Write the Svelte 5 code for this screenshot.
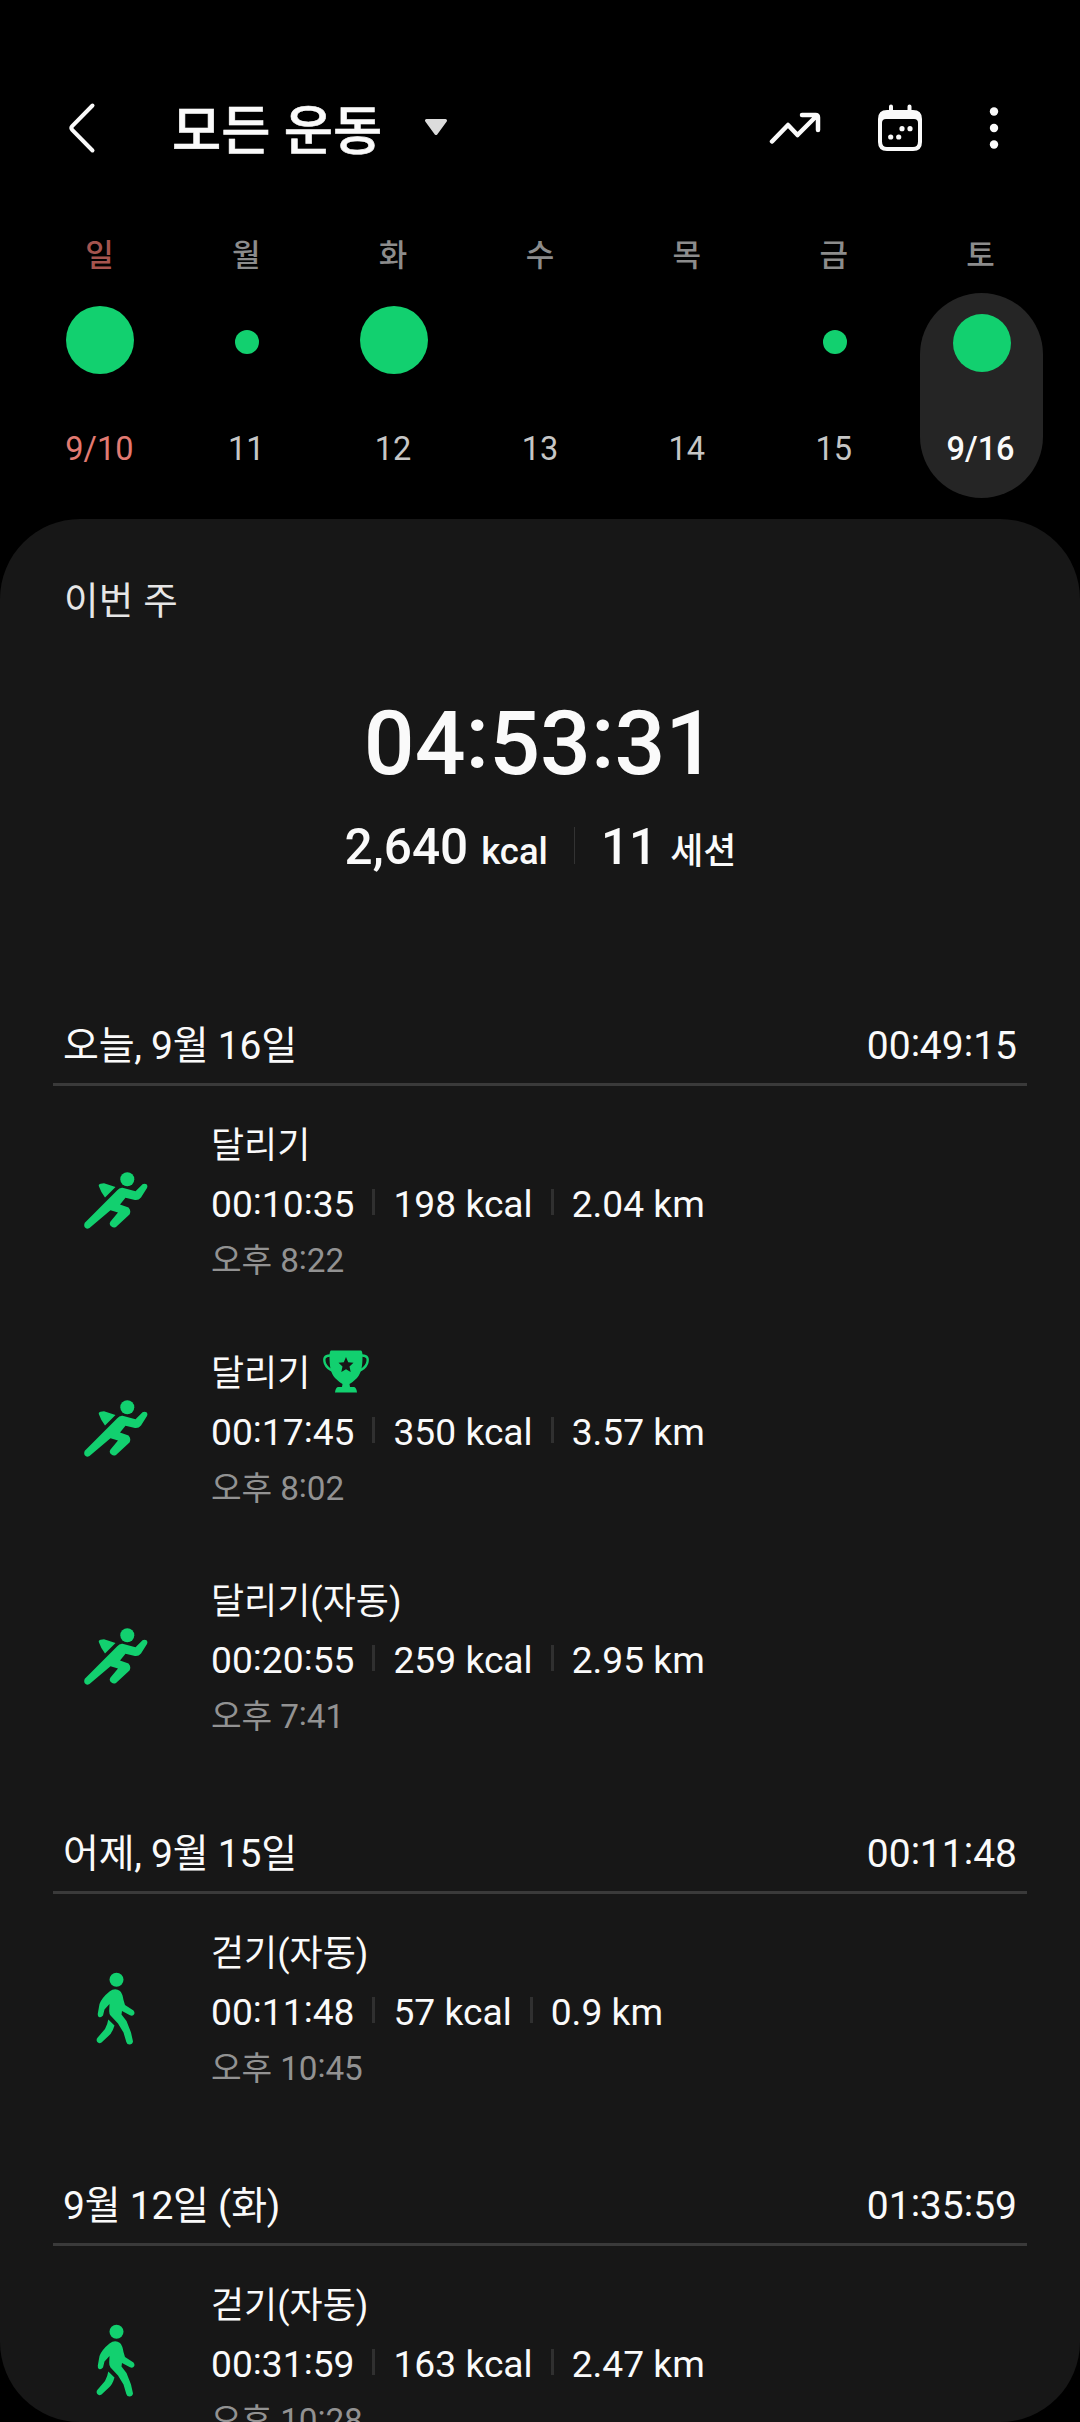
<script>
  const week = [
    { name: '일', date: '9/10', size: 68, kind: 'sunday' },
    { name: '월', date: '11', size: 24 },
    { name: '화', date: '12', size: 68 },
    { name: '수', date: '13', size: 0 },
    { name: '목', date: '14', size: 0 },
    { name: '금', date: '15', size: 24 },
    { name: '토', date: '9/16', size: 58, kind: 'selected' },
  ];

  const sections = [
    {
      title: '오늘, 9월 16일',
      total: '00:49:15',
      entries: [
        { icon: 'run', name: '달리기', stats: ['00:10:35', '198 kcal', '2.04 km'], time: '오후 8:22' },
        { icon: 'run', name: '달리기', trophy: true, stats: ['00:17:45', '350 kcal', '3.57 km'], time: '오후 8:02' },
        { icon: 'run', name: '달리기(자동)', stats: ['00:20:55', '259 kcal', '2.95 km'], time: '오후 7:41' },
      ],
    },
    {
      title: '어제, 9월 15일',
      total: '00:11:48',
      entries: [
        { icon: 'walk', name: '걷기(자동)', stats: ['00:11:48', '57 kcal', '0.9 km'], time: '오후 10:45' },
      ],
    },
    {
      title: '9월 12일 (화)',
      total: '01:35:59',
      entries: [
        { icon: 'walk', name: '걷기(자동)', stats: ['00:31:59', '163 kcal', '2.47 km'], time: '오후 10:28' },
      ],
    },
  ];
</script>

{#snippet clock(text)}{#each text.split(':') as part, i}{#if i > 0}<span class="colon">:</span>{/if}{part}{/each}{/snippet}

<main>
  <header class="bar">
    <svg class="back" viewBox="0 0 30 52" aria-hidden="true">
      <path d="M25.500 3.500 L5.200 24.200 Q3.500 26 5.200 27.800 L25.500 48.500" />
    </svg>
    <h1>모든 운동</h1>
    <svg class="caret" viewBox="0 0 24 18" aria-hidden="true">
      <path d="M2.500 2.500 H21.500 L12 15.500 Z" />
    </svg>
    <div class="actions">
      <svg class="trend" viewBox="0 0 52 34" aria-hidden="true">
        <path d="M3 30.500 L19 14 L28.500 24 L48 4.500 M33 4 H46.500 Q49 4 49 6.500 V19" />
      </svg>
      <svg class="calendar" viewBox="0 0 44 48" aria-hidden="true">
        <path class="pins" d="M13 2.500 V9 M31.500 2.500 V9" />
        <path
          fill-rule="evenodd"
          d="M9 6 H35 Q44 6 44 15 V38 Q44 47 35 47 H9 Q0 47 0 38 V15 Q0 6 9 6 Z M8 15 Q4 15 4 19 V37.500 Q4 43 9 43 H35 Q40 43 40 37.500 V19 Q40 15 36 15 Z"
        />
        <circle cx="24" cy="24.700" r="2.600" />
        <circle cx="32" cy="24.700" r="2.600" />
        <circle cx="12.700" cy="33" r="2.600" />
        <circle cx="20.700" cy="33" r="2.600" />
      </svg>
      <svg class="more" viewBox="0 0 10 44" aria-hidden="true">
        <circle cx="5" cy="5.500" r="4.200" />
        <circle cx="5" cy="22" r="4.200" />
        <circle cx="5" cy="38.500" r="4.200" />
      </svg>
    </div>
  </header>

  <section class="week">
    {#each week as day}
      <div class="day {day.kind ?? ''}">
        <span class="name">{day.name}</span>
        <div class="pill">
          <div class="dot-box">
            {#if day.size}
              <i class:large={day.size > 60} style="width:{day.size}px;height:{day.size}px"></i>
            {/if}
          </div>
          <span class="date">{day.date}</span>
        </div>
      </div>
    {/each}
  </section>

  <section class="sheet">
    <h2>이번 주</h2>
    <p class="total">{@render clock('04:53:31')}</p>
    <div class="summary">
      <span class="num">2,640</span><span class="unit">kcal</span>
      <i></i>
      <span class="num">11</span><span class="unit ko">세션</span>
    </div>

    <div class="log">
      {#each sections as section}
        <div class="group-head">
          <span>{section.title}</span>
          <span>{@render clock(section.total)}</span>
        </div>
        {#each section.entries as entry}
          <article>
            <div class="icon">
              {#if entry.icon === 'run'}
                <svg class="run" viewBox="0 0 64 58" aria-hidden="true">
                  <circle cx="43.300" cy="7.300" r="7" />
                  <path d="M15 14.500 Q14 12.300 16.500 11.700 L20 11.200 L31.500 15 L21 25.500 Q17 20.500 15 14.500 Z" />
                  <path
                    d="M33 18.500 Q35.500 15.500 38.500 15.800 L51.500 19.300 L58.500 12.300 Q60.500 11.200 62.500 12.300 Q64 13.800 63 16 L57 25.500 Q54.500 28.500 51 28 L41.500 25.800 L36 32.500 L44.500 35.500 Q47.500 38.500 45.500 42.500 L32 55 Q29.500 56.300 27.500 54.500 Q24.500 52.500 26.500 49.500 L34 40.500 L26.500 38.300 L5.500 56 Q2.500 57.500 1 55.500 Q-0.500 53.500 0.800 50.800 Z"
                  />
                </svg>
              {:else}
                <svg class="walk" viewBox="0 0 40 74" aria-hidden="true">
                  <circle cx="20.500" cy="7.800" r="7" />
                  <path
                    d="M13.500 19.500 Q19 15.500 24 19 Q26.500 21.500 27.500 28 L29 33 L37.500 38.500 Q39.500 41 37.500 43 Q36 44.300 34 43.300 L26 39 L25.500 42.500 L30.500 49 L35 60.500 L37 69.500 Q36.500 72.500 33.500 72.500 Q31 72.500 30.300 70 L27.500 60.500 L22 51.500 L14.500 43.500 Q13 41.500 13.200 38.500 L13.500 32 L8.500 37.500 L7 43.500 Q5 46 3 45 Q1.500 44.300 1.800 41.500 L3.500 32 Q6 25.500 13.500 19.500 Z"
                  />
                  <path d="M12.300 47.500 L18.500 53.500 Q16.500 60.500 13 63.500 L5.500 70.500 Q3 72 1.300 70 Q-0.200 67.800 1.500 65.700 L9 57 Q11.500 52.500 12.300 47.500 Z" />
                </svg>
              {/if}
            </div>
            <div class="info">
              <h3>
                {entry.name}
                {#if entry.trophy}
                  <svg class="trophy" viewBox="0 0 46 43" aria-hidden="true">
                    <path class="handles" d="M8 5.500 C1 5 0.500 9 2 13.500 C4 18.500 7 20 11 21 M38 5.500 C45 5 45.500 9 44 13.500 C42 18.500 39 20 35 21" />
                    <path
                      fill-rule="evenodd"
                      d="M8 0.500 H38 Q39.500 1 39.500 6 C39.500 16 38.500 23 34 28 Q30 32 26.500 34 L27 37 H31 Q33.500 37.500 34 42.500 H12 Q12.500 37.500 15 37 H19 L19.500 34 Q16 32 12 28 C7.500 23 6.500 16 6.500 6 Q6.500 1 8 0.500 Z M23 7 L20.800 12.200 L15.500 12.700 L19.500 16.500 L18.300 22 L23 19.200 L27.700 22 L26.500 16.500 L30.500 12.700 L25.200 12.200 Z"
                    />
                  </svg>
                {/if}
              </h3>
              <div class="stats">
                {#each entry.stats as stat, i}
                  {#if i > 0}<i></i>{/if}
                  <span>{@render clock(stat)}</span>
                {/each}
              </div>
              <p class="time">{@render clock(entry.time)}</p>
            </div>
          </article>
        {/each}
      {/each}
    </div>
  </section>
</main>

<style>
  :global(body) {
    margin: 0;
    background: #000;
  }
  main {
    width: 1080px;
    height: 2422px;
    overflow: hidden;
    background: #000;
    color: #fafafa;
    font-family: Roboto, 'Noto Sans CJK KR', sans-serif;
    display: flex;
    flex-direction: column;
  }
  h1, h2, h3, p {
    margin: 0;
    font-weight: 400;
  }
  svg {
    display: block;
    flex: none;
    fill: currentColor;
  }
  .colon {
    line-height: 0;
    vertical-align: 0.08em;
  }

  .bar {
    display: flex;
    align-items: center;
    height: 68px;
    padding: 94px 81px 0 67px;
  }
  .back {
    width: 30px;
    height: 52px;
    fill: none;
    stroke: currentColor;
    stroke-width: 4;
    stroke-linecap: round;
  }
  h1 {
    margin-left: 75px;
    padding-top: 7px;
    font-size: 53.500px;
    line-height: 68px;
    font-weight: 500;
    -webkit-text-stroke: 0.600px currentColor;
    white-space: nowrap;
  }
  .caret {
    width: 24px;
    height: 18px;
    margin: 0 0 3px 42px;
    color: #dcdcdc;
    stroke: currentColor;
    stroke-width: 3;
    stroke-linejoin: round;
  }
  .actions {
    display: flex;
    align-items: center;
    margin-left: auto;
  }
  .trend {
    width: 52px;
    height: 34px;
    fill: none;
    stroke: currentColor;
    stroke-width: 4.500;
    stroke-linecap: round;
    stroke-linejoin: round;
  }
  .calendar {
    width: 44px;
    height: 48px;
    margin-left: 57px;
  }
  .pins {
    stroke: currentColor;
    stroke-width: 4;
    stroke-linecap: round;
  }
  .more {
    width: 10px;
    height: 44px;
    margin-left: 67px;
  }

  .week {
    display: grid;
    grid-template-columns: repeat(7, 1fr);
    height: 283px;
    padding: 74px 25px 0 27px;
  }
  .day {
    display: flex;
    flex-direction: column;
    align-items: center;
  }
  .name {
    padding-right: 2px;
    font-size: 31px;
    line-height: 40px;
    font-weight: 500;
    color: #8c8c8c;
  }
  .pill {
    display: flex;
    flex-direction: column;
    align-items: center;
    width: 123px;
    height: 205px;
    margin-top: 17px;
    border-radius: 62px;
  }
  .dot-box {
    display: flex;
    align-items: center;
    justify-content: center;
    height: 98px;
    margin-bottom: 38px;
  }
  .dot-box i {
    border-radius: 50%;
    background: #12d06f;
  }
  .dot-box .large {
    margin-bottom: 4px;
  }
  .date {
    padding-right: 2px;
    font-size: 32.500px;
    line-height: 40px;
    color: #c6c6c6;
  }
  .sunday .name {
    color: #a5544e;
  }
  .sunday .date {
    color: #e27a72;
  }
  .selected .pill {
    background: #252525;
  }
  .selected .dot-box i {
    margin-top: 2px;
  }
  .selected .date {
    color: #fafafa;
    font-weight: 500;
  }

  .sheet {
    box-sizing: border-box;
    height: 1903px;
    padding-top: 57px;
    overflow: hidden;
    border-radius: 80px;
    background: #171717;
  }
  h2 {
    padding-left: 64px;
    font-size: 37.500px;
    line-height: 50px;
    letter-spacing: 0.300px;
    color: #e6e6e6;
  }
  .total {
    margin-top: 68px;
    font-size: 89.500px;
    line-height: 100px;
    font-weight: 500;
    text-align: center;
  }
  .summary {
    display: flex;
    justify-content: center;
    align-items: baseline;
    height: 60px;
    margin-top: 23px;
    padding-left: 1px;
    font-weight: 500;
    line-height: 60px;
  }
  .num {
    font-size: 49.500px;
  }
  .unit {
    margin-left: 13px;
    font-size: 36.500px;
  }
  .ko {
    font-size: 36px;
  }
  .summary i {
    width: 1px;
    height: 37px;
    margin: 0 26px;
    background: #333;
  }

  .log {
    margin-top: 85px;
  }
  .group-head {
    display: flex;
    justify-content: space-between;
    height: 44px;
    margin: 0 53px;
    padding: 62px 10px 15px 10px;
    border-bottom: 3px solid #3a3a3a;
    font-size: 39px;
    line-height: 44px;
  }
  .group-head span:first-child {
    letter-spacing: -0.250px;
  }
  article {
    box-sizing: border-box;
    display: flex;
    height: 228px;
    padding-top: 33px;
  }
  .icon {
    box-sizing: border-box;
    display: flex;
    align-items: center;
    justify-content: center;
    width: 64px;
    height: 163px;
    margin: 0 63px 0 84px;
    color: #12d06f;
  }
  .run {
    width: 64px;
    height: 58px;
  }
  .walk {
    width: 40px;
    height: 74px;
  }
  h3 {
    display: flex;
    font-size: 36px;
    line-height: 55px;
  }
  .trophy {
    width: 46px;
    height: 43px;
    margin: 3px 0 0 13px;
    color: #12d06f;
  }
  .handles {
    fill: none;
    stroke: currentColor;
    stroke-width: 2.400;
  }
  .stats {
    display: flex;
    font-size: 37.200px;
    line-height: 60px;
    white-space: nowrap;
  }
  .stats i {
    width: 3px;
    height: 26px;
    margin: 15px 18px 0;
    background: #303030;
  }
  .time {
    padding-top: 1px;
    font-size: 33.300px;
    line-height: 52px;
    letter-spacing: -0.100px;
    color: #929292;
  }
</style>
